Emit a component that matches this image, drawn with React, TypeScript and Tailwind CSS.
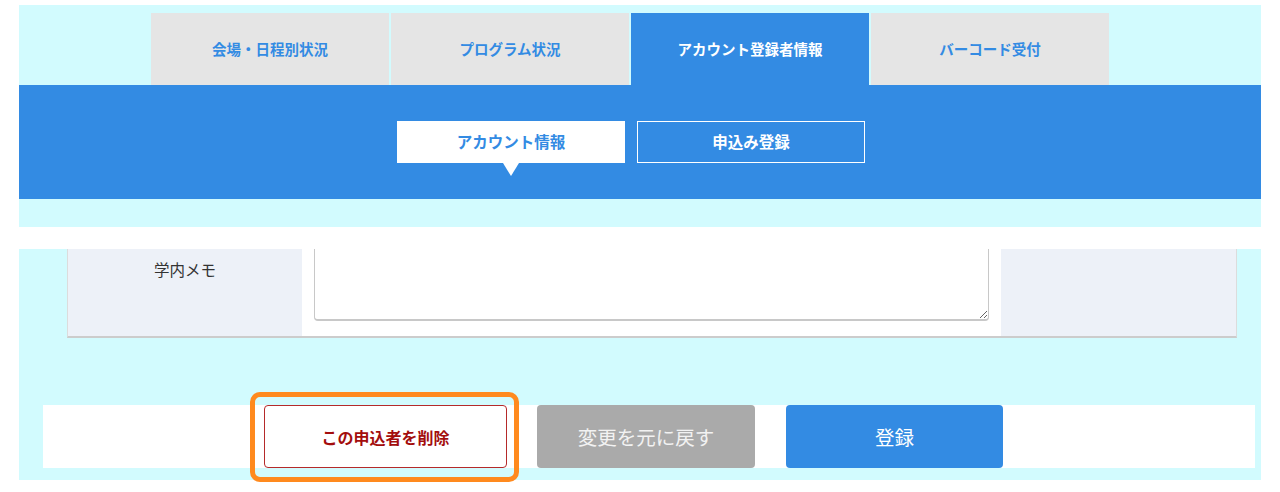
import React from "react";

const font = { fontFamily: '"Noto Sans CJK JP", "Noto Sans", sans-serif' };

export default function App() {
  const tabs = ["会場・日程別状況", "プログラム状況", "アカウント登録者情報", "バーコード受付"];
  return (
    <div className="w-[1280px] h-[492px] bg-white pt-[5px] overflow-hidden" style={font}>
      {/* top section */}
      <div className="ml-[19px] w-[1242px] bg-[#d2fbfe]">
        <div className="flex gap-[2px] pl-[132px] pt-[8px]">
          {tabs.map((t, i) => (
            <div
              key={t}
              className={
                "w-[238px] h-[72px] flex items-center justify-center text-[14.5px] font-bold " +
                (i === 2 ? "bg-[#338be3] text-white" : "bg-[#e5e5e5] text-[#338be3]")
              }
            >
              {t}
            </div>
          ))}
        </div>
        <div className="bg-[#338be3] h-[114px] pt-[36px] pl-[378px]">
          <div className="flex gap-[12px]">
            <div className="relative w-[228px] h-[42px] bg-white flex items-center justify-center text-[15.5px] font-bold text-[#338be3]">
              アカウント情報
              <div className="absolute left-1/2 top-full -translate-x-1/2 w-0 h-0 border-l-[8px] border-r-[8px] border-t-[13px] border-l-transparent border-r-transparent border-t-white" />
            </div>
            <div className="w-[228px] h-[42px] border border-white flex items-center justify-center text-[15.5px] font-bold text-white">
              申込み登録
            </div>
          </div>
        </div>
        <div className="h-[28px]" />
      </div>

      <div className="h-[22px]" />

      {/* bottom section */}
      <div className="ml-[19px] w-[1242px] h-[231px] bg-[#d2fbfe]">
        <div className="ml-[48px] w-[1170px] flex border-l border-r border-[#dcdcdc] border-b-2 border-b-[#cccccc] overflow-hidden">
          <div className="w-[234px] bg-[#edf1f8] pt-[9px] text-center text-[15.5px] text-[#333]">学内メモ</div>
          <div className="w-[699px] bg-white px-[12px] pb-[15px] overflow-hidden">
            <textarea className="block w-full h-[82px] -mt-[10px] border border-[#c8c8c8] border-b-2 rounded-[4px] bg-white resize" />
          </div>
          <div className="flex-1 bg-[#edf1f8]" />
        </div>

        <div className="mt-[67px] ml-[24px] w-[1212px] h-[63px] bg-white flex pl-[221px]">
          <div className="relative">
            <button className="w-[243px] h-[63px] rounded-[4px] border border-[#b52a2a] bg-white text-[16px] font-bold text-[#a30d0d]">
              この申込者を削除
            </button>
            <span className="pointer-events-none absolute -left-[14px] -right-[12px] -top-[13px] -bottom-[14px] border-[5px] border-[#ff8a1e] rounded-[10px]" />
          </div>
          <button className="ml-[30px] w-[218px] h-[63px] rounded-[4px] bg-[#aaaaaa] text-[19.5px] text-[#f2f2f2]">
            変更を元に戻す
          </button>
          <button className="ml-[31px] w-[217px] h-[63px] rounded-[4px] bg-[#338be3] text-[19.5px] text-white">
            登録
          </button>
        </div>
      </div>
    </div>
  );
}
